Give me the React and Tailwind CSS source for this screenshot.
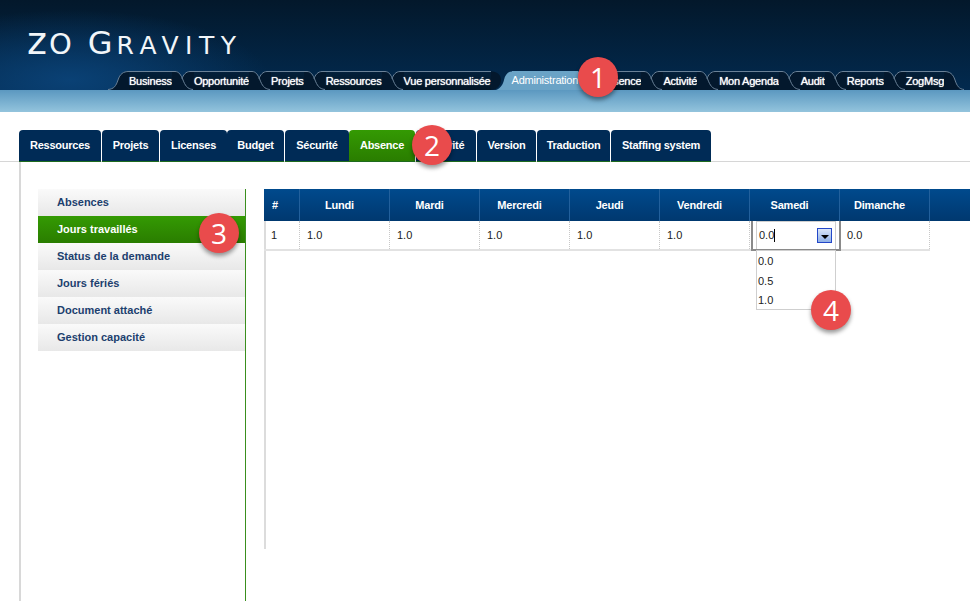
const font = "font-['Liberation_Sans',Arial,sans-serif]";

const topTabs = [
  "Business",
  "Opportunité",
  "Projets",
  "Ressources",
  "Vue personnalisée",
  "Administration",
  "Absence",
  "Activité",
  "Mon Agenda",
  "Audit",
  "Reports",
  "ZogMsg",
];

const subTabs = [
  { label: "Ressources", w: "w-[82px]" },
  { label: "Projets", w: "w-[57px]" },
  { label: "Licenses", w: "w-[67px]", flush: true },
  { label: "Budget", w: "w-[57px]" },
  { label: "Sécurité", w: "w-[64px]", flush: true },
  { label: "Absence", w: "w-[66px]", active: true },
  { label: "Priorité", w: "w-[60px]" },
  { label: "Version", w: "w-[59px]" },
  { label: "Traduction", w: "w-[73px]" },
  { label: "Staffing system", w: "w-[100px]" },
];

const sideItems = [
  "Absences",
  "Jours travaillés",
  "Status de la demande",
  "Jours fériés",
  "Document attaché",
  "Gestion capacité",
];

const columns = [
  { label: "#", w: "w-[36px]", value: "1" },
  { label: "Lundi", w: "w-[90px]", value: "1.0" },
  { label: "Mardi", w: "w-[90px]", value: "1.0" },
  { label: "Mercredi", w: "w-[90px]", value: "1.0" },
  { label: "Jeudi", w: "w-[90px]", value: "1.0" },
  { label: "Vendredi", w: "w-[90px]", value: "1.0" },
  { label: "Samedi", w: "w-[90px]", value: "" },
  { label: "Dimanche", w: "w-[90px]", value: "0.0" },
];

// curved junction between two of the top tabs
function TabJoin({ kind }) {
  const dark = "#03182d";
  const light = "#6aa3c6";
  if (kind === "first") {
    return (
      <svg width="21" height="19" className="block shrink-0">
        <path d="M0 19 C6 18 8 15 10 9 C12 3 15 .5 21 .5 L21 19 Z" fill={dark} />
        <path d="M0 18.5 C6 18 8 15 10 9 C12 3 15 .5 21 .5" fill="none" stroke="#6a8197" />
      </svg>
    );
  }
  if (kind === "last") {
    return (
      <svg width="22" height="19" className="block shrink-0">
        <path d="M0 .5 C6 .5 9 3 11 9 C13 15 15 18 20 18.5 L0 19 Z" fill={dark} />
        <path d="M0 .5 C6 .5 9 3 11 9 C13 15 15 18 20 18.5" fill="none" stroke="#6a8197" />
      </svg>
    );
  }
  if (kind === "toActive") {
    return (
      <svg width="21" height="19" className="block shrink-0">
        <path d="M5 19 C10 17 12 13 13 9 C14 4 17 .5 21 .5 L21 19 Z" fill={light} />
        <path d="M0 .5 C6 0 10 4 10 9 C10 14 6 19 0 19 Z" fill={dark} />
      </svg>
    );
  }
  if (kind === "fromActive") {
    return (
      <svg width="22" height="19" className="block shrink-0">
        <path d="M0 .5 C6 .5 9 3 11 9 C13 15 15 18 22 19 L0 19 Z" fill={light} />
        <path d="M22 .5 C16 .5 13 3 12 10 C14 15 17 18 22 19 Z" fill={dark} />
      </svg>
    );
  }
  return (
    <svg width="22" height="19" className="block shrink-0">
      <path d="M0 0 L3 .5 C7 .5 9 4 10 8 C11 4 14 .5 18 .5 L22 0 L22 19 L0 19 Z" fill={dark} />
      <path
        d="M0 .5 L3 .5 C7 .5 9 4 11 9 C13 14 15 18 21 18.5"
        fill="none"
        stroke="#6a8197"
      />
      <path d="M22 .5 L18 .5 C14 .5 11 4 10 8" fill="none" stroke="#6a8197" />
    </svg>
  );
}

function TopNav() {
  return (
    <div className="flex h-[19px] pl-[108px]">
      <TabJoin kind="first" />
      {topTabs.map((tab, i) => {
        const active = tab === "Administration";
        let kind = "normal";
        if (topTabs[i + 1] === "Administration") kind = "toActive";
        if (active) kind = "fromActive";
        return (
          <div key={tab} className="flex">
            <div
              className={`flex h-[19px] items-center whitespace-nowrap text-[11px] tracking-[-0.22px] text-white ${
                active
                  ? "bg-[#6aa3c6]"
                  : "border-t border-[#6a8197] bg-linear-to-b from-[#03203b] to-[#031525] [text-shadow:0_0_1px_#ffffff]"
              }`}
            >
              {tab}
            </div>
            <TabJoin kind={i === topTabs.length - 1 ? "last" : kind} />
          </div>
        );
      })}
    </div>
  );
}

function Logo() {
  return (
    <div className="h-[71px] pl-[27px] pt-[24px] font-['DejaVu_Sans',sans-serif] leading-[34px] whitespace-nowrap text-[#f2f6f9]">
      <span className="text-[38px] tracking-[2px]">z</span>
      <span className="text-[29px] tracking-[3px]">O</span>
      <span className="ml-[13px] text-[32px] tracking-[4px]">G</span>
      <span className="text-[25px] tracking-[6.5px]">RAVITY</span>
    </div>
  );
}

function Badge({ n, pos }) {
  return (
    <div
      className={`absolute ${pos} flex h-10 w-10 items-center justify-center rounded-full bg-[#e94b4c] font-['Open_Sans',sans-serif] text-[28px] leading-none text-white shadow-[0_3px_4px_rgba(0,0,0,0.4)]`}
    >
      {n}
    </div>
  );
}

function SubTabs() {
  return (
    <div className="flex h-[32px] border-b border-[#d6d6d6] pl-[19px]">
      {subTabs.map((tab) => (
        <div
          key={tab.label}
          className={`flex h-[32px] ${tab.w} items-center justify-center rounded-t-[4px] border-b border-[#1e6b1e] text-[11px] font-bold tracking-[-0.25px] text-white ${
            tab.flush ? "" : "mr-px"
          } ${
            tab.active
              ? "bg-linear-to-b from-[#349a03] to-[#2a7d00]"
              : "bg-[#002b56]"
          }`}
        >
          {tab.label}
        </div>
      ))}
    </div>
  );
}

function Sidebar() {
  return (
    <div className="ml-[17px] mt-[27px] w-[208px] border-r border-[#3a8f1e]">
      {sideItems.map((item) => (
        <div
          key={item}
          className={`flex h-[27px] items-center pl-[19px] text-[11px] font-bold ${
            item === "Jours travaillés"
              ? "bg-linear-to-b from-[#349a03] to-[#2a7d00] text-white"
              : "bg-linear-to-b from-[#fafafa] to-[#e8e8e8] text-[#1c3f6e]"
          }`}
        >
          {item}
        </div>
      ))}
    </div>
  );
}

function CellEditor() {
  return (
    <div className="relative h-full w-full">
      <div className="absolute left-[1px] top-0 h-[30px] w-[90px] border-x-2 border-b-2 border-[#8a8a8a] bg-white">
        <div className="mx-[3px] flex h-[28px] items-center border-x border-t border-[#cfcfcf] pl-[2px]">
          <span className="text-[11px] text-[#222]">0.0</span>
          <span className="h-[13px] w-px bg-black" />
          <span className="ml-auto mr-[3px] flex h-[15px] w-[15px] items-center justify-center border border-[#2347c8] bg-linear-to-b from-[#dbe6f8] to-[#8fb0e6]">
            <span className="mt-[2px] h-0 w-0 border-x-[4px] border-t-[4px] border-x-transparent border-t-black" />
          </span>
        </div>
      </div>
      <div className="absolute left-[6px] top-[29px] h-[60px] w-[80px] border border-[#cfcfcf] bg-white pl-[1px] pt-[1px] text-[11px] leading-[19.5px] text-[#222]">
        <div>0.0</div>
        <div>0.5</div>
        <div>1.0</div>
      </div>
    </div>
  );
}

function DaysTable() {
  return (
    <div className="ml-[18px] mt-[27px] h-[360px] flex-1 border-l-2 border-[#dcdcdc]">
      <div className="-ml-[2px] flex h-[32px] bg-linear-to-b from-[#004a8d] to-[#00386f]">
        {columns.map((col) => (
          <div
            key={col.label}
            className={`flex ${col.w} items-center justify-center border-r border-[#22609c] ${
              col.label === "#" ? "pr-[13px]" : "pr-[10px]"
            } text-[11px] font-bold tracking-[-0.2px] text-white`}
          >
            {col.label}
          </div>
        ))}
      </div>
      <div className="-ml-[2px] flex h-[30px] w-fit border-b-2 border-[#e2e2e2]">
        {columns.map((col) => {
          const editing = col.label === "Samedi";
          return (
            <div
              key={col.label}
              className={`flex ${col.w} items-center border-r border-dotted border-[#c8c8c8] ${
                editing ? "" : "pl-[7px]"
              } text-[11px] text-[#222]`}
            >
              {editing ? <CellEditor /> : col.value}
            </div>
          );
        })}
      </div>
    </div>
  );
}

export default function App() {
  return (
    <div className={`relative h-[601px] w-[970px] overflow-hidden bg-white ${font}`}>
      <div className="h-[90px] bg-[radial-gradient(ellipse_200px_70px_at_70px_80px,#0a4175,transparent),linear-gradient(180deg,#03182b,#022a4f)]">
        <Logo />
        <TopNav />
      </div>
      <div className="h-[22px] bg-linear-to-b from-[#5b98c0] to-[#93c4dd]" />

      <div className="mt-[18px]">
        <SubTabs />
        <div className="ml-[19px] flex h-[439px] border-l-2 border-[#d8d8d8]">
          <Sidebar />
          <DaysTable />
        </div>
      </div>

      <Badge n="1" pos="left-[578px] top-[57px]" />
      <Badge n="2" pos="left-[412px] top-[125px]" />
      <Badge n="3" pos="left-[199px] top-[213px]" />
      <Badge n="4" pos="left-[811px] top-[290px]" />
    </div>
  );
}
